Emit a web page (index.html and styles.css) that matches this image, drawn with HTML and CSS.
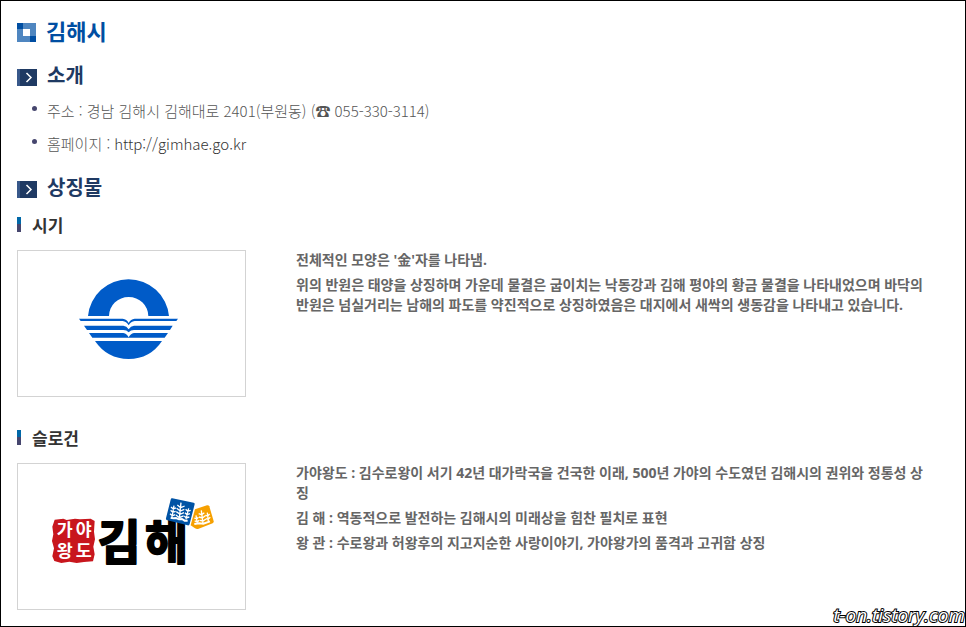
FILE: index.html
```html
<!DOCTYPE html>
<html lang="ko">
<head>
  <meta charset="UTF-8" />
  <title>김해시</title>
  <link rel="stylesheet" href="styles.css">
</head>
<body>
  <main>
    <h1>
      <svg class="icon" width="19" height="19" viewBox="0 0 19 19" shape-rendering="crispEdges">
        <path fill="#4f86c0" d="M0 0h19v19H0z"/>
        <path fill="#004ea2" d="M0 0h6v6H0zM13 13h6v6h-6z"/>
        <path fill="#fff" d="M6 6h7v7H6z"/>
      </svg>
      김해시
    </h1>

    <section>
      <h2>
        <svg class="icon" width="20" height="17" viewBox="0 0 20 17">
          <path fill="#1f3a63" d="M0 0h20v17H0z"/>
          <path fill="#38588a" d="M0 0h3v17H0z"/>
          <path fill="none" stroke="#fff" stroke-width="1.5" d="M9.500 4l4.500 4.500-4.500 4.500"/>
        </svg>
        소개
      </h2>
      <ul class="info">
        <li>주소 : 경남 김해시 김해대로 2401(부원동) (☎ 055-330-3114)</li>
        <li>홈페이지 : <a href="http://gimhae.go.kr">http://gimhae.go.kr</a></li>
      </ul>
    </section>

    <section>
      <h2>
        <svg class="icon" width="20" height="17" viewBox="0 0 20 17">
          <path fill="#1f3a63" d="M0 0h20v17H0z"/>
          <path fill="#38588a" d="M0 0h3v17H0z"/>
          <path fill="none" stroke="#fff" stroke-width="1.5" d="M9.500 4l4.500 4.500-4.500 4.500"/>
        </svg>
        상징물
      </h2>

      <h3>시기</h3>
      <div class="symbol">
        <div class="picture">
          <svg viewBox="0 0 227 145" role="img" aria-label="김해시 시기">
            <g transform="translate(52 14) scale(.3333)" fill="#005bc8">
              <path d="M54 153A122 121 0 0 1 297 153H235A59 57 0 0 0 117 153Z"/>
              <path d="M27 161H158Q170 162 176 174Q182 162 194 161H324L319 168H194Q183 169 176 181Q169 169 158 168H32Z"/>
              <path d="M42 182H160Q170 183 176 193Q182 183 192 182H308L300 195H192Q182 195 176 202Q170 195 160 195H51Z"/>
              <path d="M57 204H160Q171 206 176 217Q181 206 192 204H294L284 218H67Z"/>
              <path d="M75 228H276Q240 282 176 282Q112 282 75 228Z"/>
            </g>
          </svg>
        </div>
        <div class="desc">
          <p>전체적인 모양은 '金'자를 나타냄.</p>
          <p>위의 반원은 태양을 상징하며 가운데 물결은 굽이치는 낙동강과 김해 평야의 황금 물결을 나타내었으며 바닥의 반원은 넘실거리는 남해의 파도를 약진적으로 상징하였음은 대지에서 새싹의 생동감을 나타내고 있습니다.</p>
        </div>
      </div>

      <h3>슬로건</h3>
      <div class="symbol">
        <div class="picture">
          <svg viewBox="0 0 227 145" role="img" aria-label="가야왕도 김해">
            <g transform="translate(22 21) scale(.3333)">
              <path fill="#c8161d" d="M44 104L70 101 80 105 105 101 120 103 152 101 164 108 162 140 165 163 160 185 164 208 159 229 132 231 110 234 88 230 64 234 43 228 37 214 42 190 36 168 40 148 37 125Z"/>
              <g class="seal">
                <text x="50 107" y="153">가야</text>
                <text x="50 107" y="215">왕도</text>
              </g>
              <text class="brush" x="173 315" y="221">김해</text>
              <path fill="#0053a5" d="M397 40L461 53Q465 54 464 58L449 117Q448 122 443 121L382 106Q377 105 378 100L392 44Q393 39 397 40Z"/>
              <path fill="#f6a000" d="M465 73L501 61Q506 60 508 64L521 108Q522 113 518 115L476 131Q470 133 464 129L452 121Z"/>
              <g fill="none" stroke="#fff" stroke-width="4">
                <path d="M423 53L418 101M412 60l10 8 12-5M410 70l11 8 12-5M409 80l11 8 12-5M408 90l10 8 13-5"/>
                <path d="M402 62L396 96M393 66l7 6 8-3M392 76l6 6 9-3M390 86l7 6 9-3"/>
                <path d="M446 70L438 103M437 73l6 6 9-3M435 83l6 6 9-3M433 93l6 6 9-3"/>
                <path d="M392 98l8 2 8-1 9 4 9-1 8 5 9 0" stroke-width="6"/>
                <path d="M484 76L489 116M476 86l9 3 8-6M477 96l10 3 9-7M479 106l10 2 9-6M468 91l4 25M463 99l7 3 5-5M464 108l8 3 5-5M502 83l3 25M496 91l7 2 6-6M498 101l6 2 7-6"/>
                <path d="M463 117l14-2 13 1 20-7" stroke-width="6"/>
              </g>
            </g>
          </svg>
        </div>
        <div class="desc">
          <p>가야왕도 : 김수로왕이 서기 42년 대가락국을 건국한 이래, 500년 가야의 수도였던 김해시의 권위와 정통성 상징</p>
          <p>김 해 : 역동적으로 발전하는 김해시의 미래상을 힘찬 필치로 표현</p>
          <p>왕 관 : 수로왕과 허왕후의 지고지순한 사랑이야기, 가야왕가의 품격과 고귀함 상징</p>
        </div>
      </div>
    </section>
  </main>
  <div class="watermark">t-on.tistory.com</div>
</body>
</html>
```
FILE: styles.css
```css
* {
  box-sizing: border-box;
}

body {
  position: relative;
  margin: 0;
  min-height: 100vh;
  border: 1px solid #000;
  background: #fff;
  color: #666;
  font-family: "Open Sans", "Noto Sans CJK KR", sans-serif;
  font-size: 14px;
}

main {
  padding: 15px 32px 12px 16px;
}

h1, h2, h3, p, ul {
  margin: 0;
  padding: 0;
}

h1, h2 {
  display: flex;
  align-items: center;
  gap: 10px;
}

h1 {
  color: #004ea2;
  font-size: 22px;
  line-height: 30px;
}

h2 {
  margin-top: 16px;
  color: #1f3a63;
  font-size: 20px;
  line-height: 28px;
}

.icon {
  flex: none;
  margin-top: 2px;
}

.info {
  margin-top: 4px;
  list-style: none;
  color: #555;
  font-family: "Noto Sans CJK KR", sans-serif;
  font-size: 15px;
  font-weight: 300;
}

.info li {
  display: flex;
  align-items: center;
  gap: 4px;
  height: 33px;
}

.info li::before {
  content: "";
  width: 5px;
  height: 5px;
  margin: 0 6px 4px 15px;
  border-radius: 50%;
  background: #46466e;
}

.info a {
  color: #333;
  text-decoration: none;
}

section + section h2 {
  margin-top: 14px;
}

h3 {
  display: flex;
  align-items: center;
  gap: 11px;
  margin-top: 12px;
  color: #333;
  font-size: 17px;
  line-height: 24px;
}

h3::before {
  content: "";
  width: 4px;
  height: 15px;
  margin-bottom: 4px;
  background: linear-gradient(#0068a8 50%, #46466e 50%);
}

.symbol {
  display: flex;
  gap: 50px;
  margin-top: 12px;
}

.symbol + h3 {
  margin-top: 30px;
}

.picture {
  flex: none;
  width: 229px;
  border: 1px solid #d3d3d3;
}

.picture svg {
  display: block;
}

.desc {
  font-weight: 700;
  line-height: 20px;
}

.desc p {
  margin-bottom: 5px;
}

.seal {
  fill: #fff;
  font-family: "Liberation Sans", "Noto Sans CJK KR", sans-serif;
  font-size: 52px;
  font-weight: 700;
}

.brush {
  fill: #000;
  stroke: #000;
  stroke-width: 6px;
  stroke-linejoin: round;
  font-size: 140px;
  font-weight: 700;
}

.watermark {
  position: absolute;
  right: 0;
  bottom: 0;
  color: #fff;
  font-size: 19px;
  font-style: italic;
  font-weight: 500;
  line-height: 22px;
  -webkit-text-stroke: 2px #000;
  paint-order: stroke fill;
}
```
